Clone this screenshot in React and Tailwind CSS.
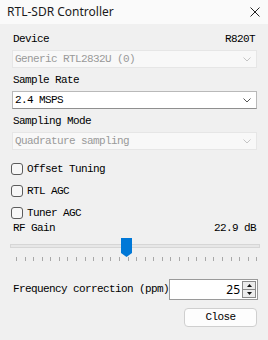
import React from 'react';

const mono = { fontFamily: '"Liberation Mono", "DejaVu Sans Mono", monospace' };

const Chevron = ({ color }) => (
    <svg width="8" height="5" viewBox="0 0 8 5" fill="none">
        <path d="M0.5 0.5 L4 4 L7.5 0.5" stroke={color} strokeWidth="1" />
    </svg>
);

const Combo = ({ value, disabled }) => (
    <div
        className={`mt-[3px] h-[18px] flex items-center justify-between pl-[2px] pr-[5px] border ${
            disabled
                ? 'bg-[#f8f8f8] border-[#e6e6e6] text-[#9a9a9a]'
                : 'bg-white border-[#b9b9b9] border-b-[#8f8f8f] text-black'
        }`}>
        <span>{value}</span>
        <Chevron color={disabled ? '#c4c4c4' : '#555555'} />
    </div>
);

const Check = ({ label }) => (
    <div className="h-[14px] flex items-center gap-[4px] -ml-[1px]">
        <div className="w-[12px] h-[12px] rounded-[3px] border border-[#5c5c5c] bg-[#f7f7f7]" />
        <span>{label}</span>
    </div>
);

const ticks = Array.from({ length: 29 }, (_, i) => Math.round(6 + i * 8.58));

const App = () => {
    return (
        <div className="w-[268px] h-[340px] bg-[#f0f0f0] flex flex-col overflow-hidden">
            <div className="h-[24px] bg-[#fafafa] flex items-center justify-between pl-[7px] pr-[8px]">
                <span
                    className="text-[12px] text-[#1b1b1b]"
                    style={{ fontFamily: '"Segoe UI", "Noto Sans", sans-serif' }}>
                    RTL-SDR Controller
                </span>
                <svg width="10" height="10" viewBox="0 0 10 10">
                    <path d="M0.5 0.5 L9.5 9.5 M9.5 0.5 L0.5 9.5" stroke="#222" strokeWidth="1" />
                </svg>
            </div>

            <div className="flex flex-col pl-[12px] pr-[11px] text-[11px] tracking-[-0.6px] text-black" style={mono}>
                <div className="mt-[7px] h-[16px] flex items-center justify-between pl-[1px] pr-[2px]">
                    <span>Device</span>
                    <span>R820T</span>
                </div>
                <Combo value="Generic RTL2832U (0)" disabled />

                <div className="mt-[4px] h-[16px] flex items-center pl-[1px]">Sample Rate</div>
                <Combo value="2.4 MSPS" />

                <div className="mt-[4px] h-[16px] flex items-center pl-[1px]">Sampling Mode</div>
                <Combo value="Quadrature sampling" disabled />

                <div className="mt-[12px] flex flex-col gap-[8px]">
                    <Check label="Offset Tuning" />
                    <Check label="RTL AGC" />
                    <Check label="Tuner AGC" />
                </div>

                <div className="h-[16px] flex items-center justify-between pl-[1px] pr-[1px]">
                    <span>RF Gain</span>
                    <span>22.9 dB</span>
                </div>

                <div className="relative h-[26px] -ml-[2px] -mr-[3px]">
                    <div className="absolute left-0 right-0 top-[8px] h-[4px] bg-[#e7e7e7] border border-[#d6d6d6]" />
                    <svg className="absolute left-[111px] top-[2px]" width="11" height="19" viewBox="0 0 11 19">
                        <path d="M0 0 H11 V15 L5.5 19 L0 15 Z" fill="#0078d7" />
                    </svg>
                    {ticks.map((x) => (
                        <div
                            key={x}
                            className="absolute top-[21px] w-[1px] h-[4px] bg-[#a8a8a8]"
                            style={{ left: x }}
                        />
                    ))}
                </div>

                <div className="mt-[17px] h-[21px] flex items-center justify-between">
                    <span className="pl-[1px] whitespace-nowrap">Frequency correction (ppm)</span>
                    <div className="shrink-0 w-[89px] h-[21px] bg-white border border-[#9a9a9a] flex items-center justify-end">
                        <span className="text-[12px] tracking-normal pr-[2px]" style={{ fontFamily: '"Segoe UI", "Noto Sans", sans-serif' }}>25</span>
                        <div className="w-[14px] h-[17px] mr-[1px] flex flex-col border border-[#8a8a8a] bg-[#ececec]">
                            <div className="flex-1 flex items-center justify-center border-b border-[#8a8a8a]">
                                <svg width="5" height="3" viewBox="0 0 5 3"><path d="M0 3 L2.5 0 L5 3 Z" fill="#111" /></svg>
                            </div>
                            <div className="flex-1 flex items-center justify-center">
                                <svg width="5" height="3" viewBox="0 0 5 3"><path d="M0 0 L2.5 3 L5 0 Z" fill="#111" /></svg>
                            </div>
                        </div>
                    </div>
                </div>

                <div className="mt-[8px] self-end w-[73px] h-[19px] rounded-[4px] border border-[#cfcfcf] bg-[#fdfdfd] flex items-center justify-center">
                    Close
                </div>
            </div>
        </div>
    );
};

export default App;
